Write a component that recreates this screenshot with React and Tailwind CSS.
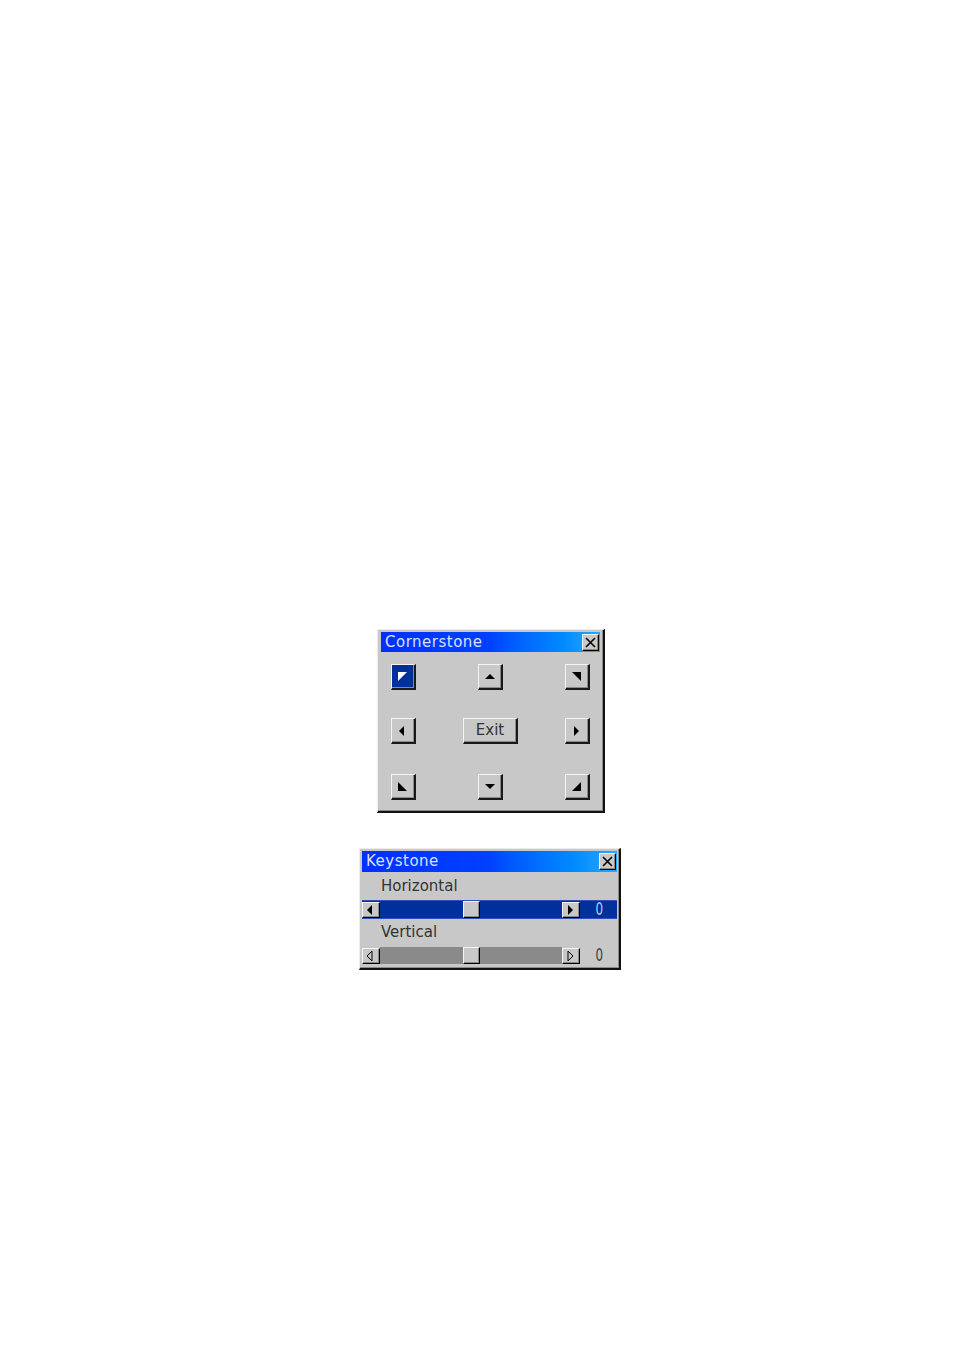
import React from 'react'

const FONT = { fontFamily: '"DejaVu Sans", "Liberation Sans", sans-serif' }

// raised bevel used by every OSD button (background set separately)
const bevel =
  'border-t border-l border-[#f4f4f4] border-r-2 border-b-2 border-r-[#1a1a1a] border-b-[#1a1a1a] shadow-[inset_-1px_-1px_0_#8a8a8a]'

function Tri({ kind, fill = '#000', hollow = false }) {
  const shapes = {
    up: '5,2 10,7 0,7',
    down: '0,2 10,2 5,7',
    left: '6,0 6,10 1,5',
    right: '2,0 2,10 7,5',
    tl: '0,0 9,0 0,9',
    tr: '0,0 9,0 9,9',
    bl: '0,0 9,9 0,9',
    br: '9,0 9,9 0,9',
  }
  return (
    <svg width="10" height="10" viewBox="0 0 10 10" className="block">
      <polygon
        points={shapes[kind]}
        fill={hollow ? 'none' : fill}
        stroke={hollow ? '#000' : 'none'}
        strokeWidth="1"
      />
    </svg>
  )
}

function CloseBox() {
  return (
    <div className="w-[17px] h-[17px] flex items-center justify-center bg-[#c8c8c8] border-t border-l border-[#f4f4f4] border-r border-b border-r-black border-b-black shadow-[inset_-1px_-1px_0_#8a8a8a]">
      <svg width="11" height="11" viewBox="0 0 11 11" className="block">
        <path d="M1 1 L10 10 M10 1 L1 10" stroke="#000" strokeWidth="1.6" />
      </svg>
    </div>
  )
}

function TitleBar({ title, height = 'h-[20px]' }) {
  return (
    <div className={`${height} flex items-center justify-between pl-[4px] pr-[1px] bg-gradient-to-r from-[#0030ff] via-[#0040ff] to-[#28a8ff]`}>
      <span className="text-[15px] leading-none text-[#d8e2ff] tracking-[0.5px]">{title}</span>
      <CloseBox />
    </div>
  )
}

function Window({ children, className = '' }) {
  return (
    <div
      className={`bg-[#c8c8c8] border-t border-l border-[#ececec] border-r-2 border-b-2 border-r-[#111] border-b-[#111] shadow-[inset_-1px_-1px_0_#8a8a8a] ${className}`}
      style={FONT}
    >
      {children}
    </div>
  )
}

function ArrowButton({ kind, selected = false }) {
  return (
    <div
      className={`w-[25px] h-[26px] flex items-center justify-center ${bevel} ${
        selected ? 'bg-[#00309c]' : 'bg-[#c8c8c8]'
      }`}
    >
      <Tri kind={kind} fill={selected ? '#ffffff' : '#000'} />
    </div>
  )
}

function Cell({ children }) {
  return <div className="w-[25px] flex justify-center">{children}</div>
}

function Slider({ active }) {
  const small =
    'bg-[#c8c8c8] border-t border-l border-[#f4f4f4] border-r border-b border-r-black border-b-black shadow-[inset_-1px_-1px_0_#8a8a8a]'
  return (
    <div
      className={`h-[19px] flex items-center ${
        active ? 'bg-[#00309c] border-y border-[#3050c0]' : ''
      }`}
    >
      <div className={`w-[18px] h-[16px] flex items-center justify-center ${small}`}>
        <Tri kind="left" hollow={!active} />
      </div>
      <div className={`w-[182px] h-[17px] flex items-center ${active ? '' : 'bg-[#8a8a8a]'}`}>
        <div className={`ml-[83px] w-[17px] h-[17px] ${small}`} />
      </div>
      <div className={`w-[18px] h-[16px] flex items-center justify-center ${small}`}>
        <Tri kind="right" hollow={!active} />
      </div>
      <span
        className={`ml-[14px] text-[17px] leading-none ${active ? 'text-[#b8c8f0]' : 'text-[#404040]'}`}
        style={{ transform: 'scaleX(0.7)' }}
      >
        0
      </span>
    </div>
  )
}

export default function App() {
  return (
    <div className="min-h-[1351px] bg-white pt-[629px]">
      {/* Cornerstone */}
      <Window className="ml-[377px] w-[228px] h-[184px] pt-[2px] px-[3px]">
        <TitleBar title="Cornerstone" />
        <div className="flex flex-col pt-[12px] pl-[10px]">
          <div className="flex gap-[62px]">
            <Cell><ArrowButton kind="tl" selected /></Cell>
            <Cell><ArrowButton kind="up" /></Cell>
            <Cell><ArrowButton kind="tr" /></Cell>
          </div>
          <div className="flex gap-[62px] mt-[28px]">
            <Cell><ArrowButton kind="left" /></Cell>
            <Cell>
              <div className={`shrink-0 w-[55px] h-[26px] flex items-center justify-center text-[15px] text-[#333] bg-[#c8c8c8] ${bevel}`}>
                Exit
              </div>
            </Cell>
            <Cell><ArrowButton kind="right" /></Cell>
          </div>
          <div className="flex gap-[62px] mt-[30px]">
            <Cell><ArrowButton kind="bl" /></Cell>
            <Cell><ArrowButton kind="down" /></Cell>
            <Cell><ArrowButton kind="br" /></Cell>
          </div>
        </div>
      </Window>

      {/* Keystone */}
      <Window className="ml-[359px] mt-[35px] w-[262px] h-[122px] pt-[2px] px-[2px]">
        <TitleBar title="Keystone" height="h-[21px]" />
        <div className="h-[28px] flex items-center pl-[19px] text-[15px] text-[#333]">Horizontal</div>
        <Slider active />
        <div className="h-[27px] flex items-center pl-[19px] text-[15px] text-[#333]">Vertical</div>
        <Slider active={false} />
      </Window>
    </div>
  )
}
